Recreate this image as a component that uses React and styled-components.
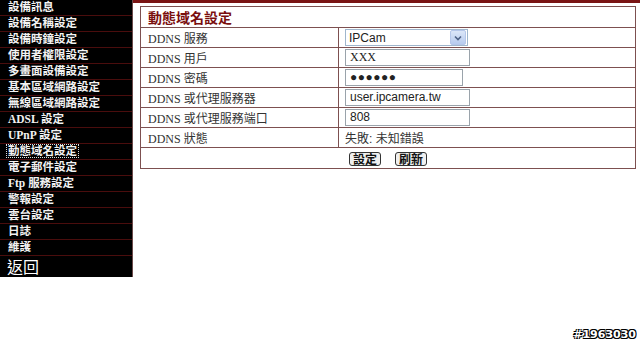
import React from "react";
import styled, { createGlobalStyle } from "styled-components";

const Global = createGlobalStyle`
  body {
    margin: 0;
    background: #fff;
    font-family: "Liberation Serif", "Noto Sans CJK TC", serif;
  }
`;

const menu = [
  "設備訊息",
  "設備名稱設定",
  "設備時鐘設定",
  "使用者權限設定",
  "多畫面設備設定",
  "基本區域網路設定",
  "無線區域網路設定",
  "ADSL 設定",
  "UPnP 設定",
  "動態域名設定",
  "電子郵件設定",
  "Ftp 服務設定",
  "警報設定",
  "雲台設定",
  "日誌",
  "維護",
];

const Page = styled.div`
  display: flex;
  align-items: flex-start;
  width: 640px;
  height: 346px;
  position: relative;
`;

const Sidebar = styled.ul`
  list-style: none;
  margin: 0;
  padding: 0;
  width: 133px;
  background: #000;
  border-right: 1px solid #6b4a4a;
  box-sizing: border-box;
`;

const MenuItem = styled.li`
  height: 15px;
  line-height: 15px;
  padding-left: 7px;
  border-bottom: 1px solid #4a0d0d;
  color: #f2f2f2;
  font-weight: bold;
  font-size: 11.5px;
  font-family: "Liberation Serif", "Noto Sans CJK TC", serif;
  white-space: nowrap;
  span {
    outline: ${(p) => (p.$active ? "1px dotted #ddd" : "none")};
    padding: 0 1px;
  }
`;

const BackItem = styled.li`
  height: 21px;
  line-height: 20px;
  padding-left: 7px;
  color: #fff;
  font-size: 16px;
  font-family: "Noto Sans CJK TC", serif;
`;

const Main = styled.div`
  flex: 1;
  border-top: 3px solid #7a1414;
  padding: 3px 3px 0 7px;
`;

const Table = styled.table`
  width: 496px;
  border-collapse: collapse;
  border: 1px solid #7d5050;
  font-size: 12px;
  color: #333;
`;

const TitleCell = styled.th`
  height: 18px;
  padding: 0 0 0 7px;
  text-align: left;
  color: #7a0e0e;
  font-size: 14px;
  font-weight: bold;
  font-family: "Noto Sans CJK TC", serif;
  border: 1px solid #7d5050;
`;

const Label = styled.td`
  width: 190px;
  height: 19px;
  padding: 0 0 0 7px;
  border: 1px solid #7d5050;
  font-family: "Liberation Serif", "Noto Sans CJK TC", serif;
  white-space: nowrap;
`;

const Value = styled.td`
  padding: 0 0 0 6px;
  border: 1px solid #7d5050;
  font-family: "Liberation Sans", "Noto Sans CJK TC", sans-serif;
`;

const ButtonCell = styled.td`
  height: 20px;
  text-align: center;
  border: 1px solid #7d5050;
  padding: 0;
`;

const Field = styled.div`
  width: ${(p) => p.$w}px;
  height: 15px;
  border: 1px solid #9aa3ab;
  box-sizing: content-box;
  line-height: 15px;
  padding-left: 4px;
  font-size: 12px;
  color: #222;
  font-family: ${(p) =>
    p.$serif ? '"Liberation Serif", serif' : '"Liberation Sans", sans-serif'};
  letter-spacing: ${(p) => (p.$dots ? "0.5px" : "0")};
`;

const SelectBox = styled.div`
  width: 118px;
  height: 15px;
  border: 1px solid #9fb6cd;
  display: flex;
  align-items: center;
  justify-content: space-between;
  padding-left: 3px;
  font-size: 12px;
  color: #222;
`;

const Arrow = styled.div`
  width: 14px;
  height: 13px;
  margin-right: 1px;
  background: linear-gradient(#dbe6f8, #b7cbef);
  border: 1px solid #b5c7ea;
  border-radius: 2px;
  display: flex;
  align-items: center;
  justify-content: center;
`;

const Btn = styled.button`
  height: 14px;
  padding: 0 3px;
  margin: 0 7px;
  font-size: 12px;
  line-height: 11px;
  font-family: "Noto Sans CJK TC", sans-serif;
  font-weight: bold;
  color: #111;
  background: #f0f0f0;
  border: 1px solid #333;
  border-radius: 3px;
  vertical-align: middle;
`;

const Stamp = styled.div`
  position: absolute;
  right: 4px;
  bottom: 5px;
  color: #fff;
  font-family: "DejaVu Sans", sans-serif;
  font-weight: bold;
  font-size: 11px;
  text-shadow: -1px -1px 0 #000, 1px -1px 0 #000, -1px 1px 0 #000,
    1px 1px 0 #000;
`;

export default function App() {
  return (
    <Page>
      <Global />
      <Sidebar>
        {menu.map((m) => (
          <MenuItem key={m} $active={m === "動態域名設定"}>
            <span>{m}</span>
          </MenuItem>
        ))}
        <BackItem>返回</BackItem>
      </Sidebar>
      <Main>
        <Table>
          <tbody>
            <tr>
              <TitleCell colSpan={2}>動態域名設定</TitleCell>
            </tr>
            <tr>
              <Label>DDNS 服務</Label>
              <Value>
                <SelectBox>
                  IPCam
                  <Arrow>
                    <svg width="8" height="6" viewBox="0 0 8 6">
                      <path d="M1 1.5 L4 4.5 L7 1.5" fill="none" stroke="#4d6185" strokeWidth="1.6" />
                    </svg>
                  </Arrow>
                </SelectBox>
              </Value>
            </tr>
            <tr>
              <Label>DDNS 用戶</Label>
              <Value>
                <Field $w={119} $serif>XXX</Field>
              </Value>
            </tr>
            <tr>
              <Label>DDNS 密碼</Label>
              <Value>
                <Field $w={112} $dots>●●●●●●</Field>
              </Value>
            </tr>
            <tr>
              <Label>DDNS 或代理服務器</Label>
              <Value>
                <Field $w={119}>user.ipcamera.tw</Field>
              </Value>
            </tr>
            <tr>
              <Label>DDNS 或代理服務端口</Label>
              <Value>
                <Field $w={119}>808</Field>
              </Value>
            </tr>
            <tr>
              <Label>DDNS 狀態</Label>
              <Value>失敗: 未知錯誤</Value>
            </tr>
            <tr>
              <ButtonCell colSpan={2}>
                <Btn>設定</Btn>
                <Btn>刷新</Btn>
              </ButtonCell>
            </tr>
          </tbody>
        </Table>
      </Main>
      <Stamp>#1963030</Stamp>
    </Page>
  );
}
